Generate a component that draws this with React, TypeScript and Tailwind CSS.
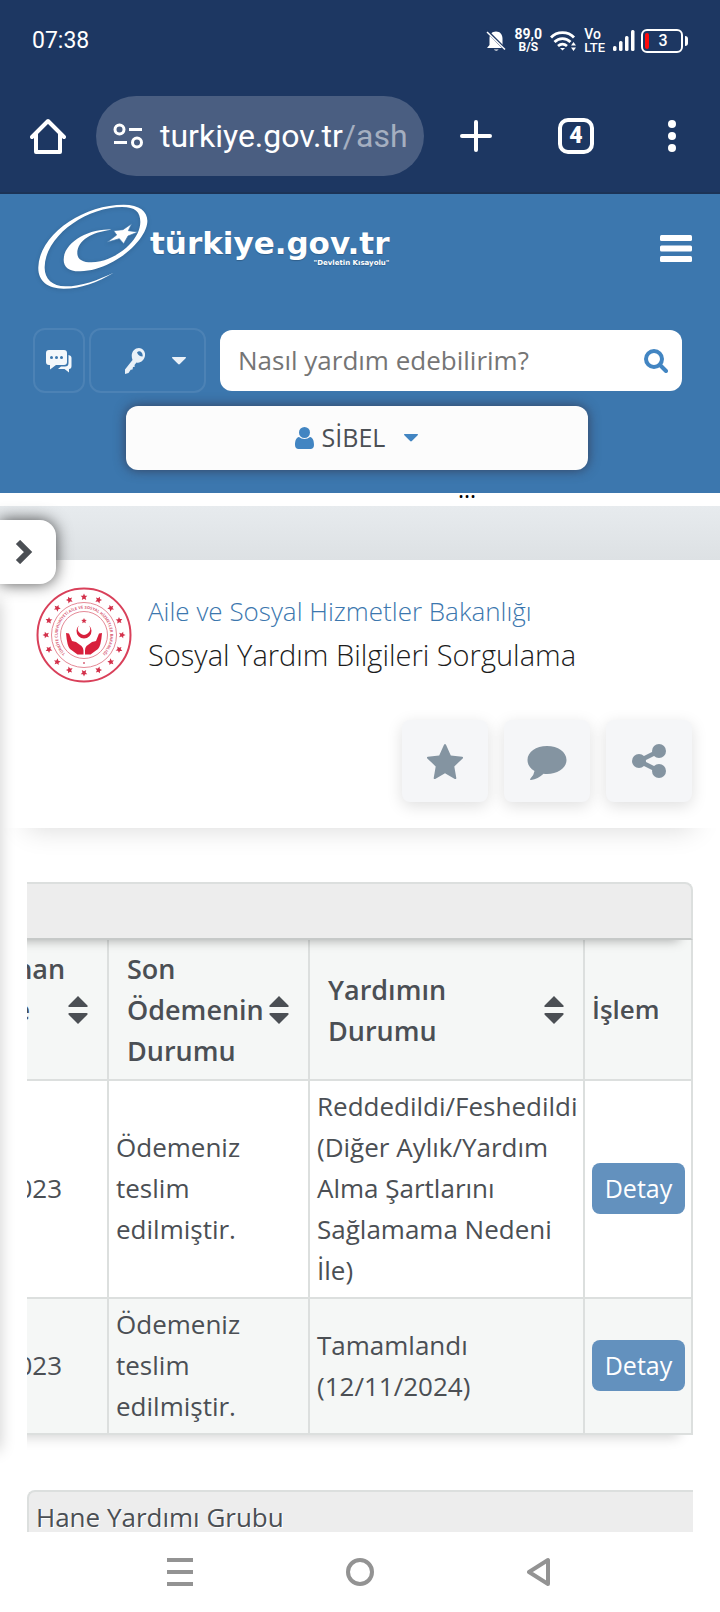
import type { ReactNode } from 'react';

const openSans = "font-['Open_Sans','Noto_Sans',sans-serif]";

const rows = [
  {
    date: '01/01/2023',
    payment: 'Ödemeniz\nteslim\nedilmiştir.',
    status:
      'Reddedildi/Feshedildi\n(Diğer Aylık/Yardım\nAlma Şartlarını\nSağlamama Nedeni\nİle)',
  },
  {
    date: '01/01/2023',
    payment: 'Ödemeniz\nteslim\nedilmiştir.',
    status: 'Tamamlandı\n(12/11/2024)',
  },
];

function StatusBar() {
  return (
    <div className="flex h-[82px] items-center justify-between px-8">
      <span className="text-[23px]">07:38</span>
      <div className="flex items-center">
        <svg className="h-6 w-5" viewBox="0 0 20 24" fill="none">
          <path
            d="M10 2.500c-4 0-6.500 2.800-6.500 7v6.500L1 19h18l-2.500-3V9.500c0-4.200-2.500-7-6.500-7z"
            fill="white"
          />
          <path d="M8 20.500h4.500c-.5 1.500-4 1.500-4.500 0z" fill="white" />
          <path d="M0 1l20 20" stroke="#1d3762" strokeWidth="3" />
          <path d="M1 3l18 17.500" stroke="white" strokeWidth="1.500" />
        </svg>
        <div className="ml-2 flex w-7 flex-col items-center font-bold">
          <span className="text-[14px] leading-[13px]">89,0</span>
          <span className="text-[12px] leading-[13px]">B/S</span>
        </div>
        <svg className="ml-2 h-6 w-[26px]" viewBox="0 0 26 24" fill="none" stroke="white">
          <path d="M1 8.500c6-6.500 17-6.500 23 0" strokeWidth="2.800" />
          <path d="M4.500 13c4.500-4.500 11.500-4.500 16 0" strokeWidth="2.800" />
          <path d="M8 17c3-2.500 6-2.500 9 0" strokeWidth="2.800" />
          <path d="M10 19h5l-2.500 2.500z" fill="white" stroke="none" />
          <path d="M23.500 13l2.500 3.500h-5zM23.500 22l2.500-3.500h-5z" fill="white" stroke="none" />
        </svg>
        <div className="ml-2 flex flex-col font-medium">
          <span className="text-[14px] leading-[13px]">Vo</span>
          <span className="text-[13px] leading-[13px]">LTE</span>
        </div>
        <svg className="ml-2 h-6 w-[22px]" viewBox="0 0 22 24" fill="white">
          <rect x="0" y="17" width="3.500" height="5" rx="1.500" />
          <rect x="6" y="12" width="3.500" height="10" rx="1.500" />
          <rect x="12" y="7" width="3.500" height="15" rx="1.500" />
          <rect x="18" y="1" width="3.500" height="21" rx="1.500" />
        </svg>
        <div className="ml-1.5 flex items-center">
          <div className="flex h-6 w-[42px] items-center rounded-md border-2 border-white pl-0.5">
            <span className="h-4 w-1 rounded-sm bg-[#ff0a0a]" />
            <span className="flex-1 pr-1 text-center text-[16px] leading-4 font-medium">3</span>
          </div>
          <span className="ml-0.5 h-2.5 w-[3px] rounded-r bg-white" />
        </div>
      </div>
    </div>
  );
}

function BrowserBar() {
  return (
    <div className="flex items-center border-b-2 border-[#1c3356] pt-3.5 pr-9 pb-4 pl-[30px]">
      <button type="button" aria-label="Ana sayfa">
        <svg className="size-9" viewBox="0 0 36 36" fill="none" stroke="white" strokeWidth="4">
          <path d="M2 19L18 3l16 16" strokeLinejoin="round" strokeLinecap="round" />
          <path d="M6 16v18h24V16" strokeLinejoin="round" />
        </svg>
      </button>
      <button
        type="button"
        className="ml-[30px] flex h-20 min-w-0 flex-1 items-center rounded-full bg-[#4a5e81] pl-4"
      >
        <svg className="size-8 shrink-0" viewBox="0 0 32 32" fill="none" stroke="white" strokeWidth="3">
          <circle cx="7.500" cy="9.500" r="4.500" />
          <path d="M17 9.500h13M2 22.500h13" />
          <circle cx="25" cy="22.500" r="4.500" />
        </svg>
        <span className="ml-4 text-[32px]">
          turkiye.gov.tr<span className="text-[#a5afc0]">/ash</span>
        </span>
      </button>
      <button type="button" aria-label="Yeni sekme" className="ml-9">
        <svg className="size-8" viewBox="0 0 32 32" stroke="white" strokeWidth="4" strokeLinecap="round">
          <path d="M16 2v28M2 16h28" />
        </svg>
      </button>
      <button
        type="button"
        aria-label="Sekmeler"
        className="ml-[66px] flex size-9 items-center justify-center rounded-[10px] border-4 border-white text-[23px] font-black"
      >
        4
      </button>
      <button type="button" aria-label="Menü" className="ml-[66px]">
        <svg className="h-8 w-6" viewBox="0 0 24 32" fill="white">
          <circle cx="12" cy="4" r="4" />
          <circle cx="12" cy="16" r="4" />
          <circle cx="12" cy="28" r="4" />
        </svg>
      </button>
    </div>
  );
}

function Logo() {
  return (
    <a href="#" aria-label="türkiye.gov.tr" className="flex text-white">
      <svg className="h-[87px] w-[113px] drop-shadow-sm" viewBox="110 38 339 261" fill="white">
        <path d="M340 247C290 277 240 295 190 295C140 295 112 270 114 230C118 130 250 43 370 43C420 43 443 65 441 95C438 150 340 240 240 243C205 244 190 230 190 208C190 160 260 114 333 118C275 125 230 150 231 190C232 215 265 220 300 213C370 195 420 140 420 95C420 65 405 50 365 50C260 50 135 135 133 230C132 265 155 287 195 288C245 288 290 270 340 247Z" />
        <path
          d="M394 100L384 121L413 125L383 137L370 160L357 145L320 156L349 134L340 121L368 118Z"
          stroke="#3c77ae"
          strokeWidth="2"
        />
      </svg>
      <span className="flex flex-col items-end pt-[23px] font-['DejaVu_Sans',sans-serif] font-bold text-shadow-xs">
        <span className="text-[31px] leading-[34px]">türkiye.gov.tr</span>
        <span className="text-[7px] leading-[7px]">&quot;Devletin Kısayolu&quot;</span>
      </span>
    </a>
  );
}

function Caret({ className }: { className: string }) {
  return (
    <svg className={className} viewBox="0 0 16 9" fill="currentColor">
      <path d="M1 0h14c1 0 1 .8.5 1.300L9 8c-.6.600-1.400.600-2 0L.5 1.300C0 .8 0 0 1 0z" />
    </svg>
  );
}

function SiteHeader() {
  return (
    <header className="bg-[#3c77ae] pt-[9px] pb-[23px]">
      <div className="flex h-[86px] items-start justify-between pr-7 pl-[37px]">
        <Logo />
        <button type="button" aria-label="Menü" className="mt-8 text-white">
          <svg className="h-[27px] w-8" viewBox="0 0 32 27" fill="currentColor">
            <rect width="32" height="6" rx="1.500" />
            <rect y="10.500" width="32" height="6" rx="1.500" />
            <rect y="21" width="32" height="6" rx="1.500" />
          </svg>
        </button>
      </div>
      <div className="mt-[39px] flex items-center pr-[38px] pl-[33px]">
        <button
          type="button"
          aria-label="Mesajlar"
          className="flex h-[65px] w-[52px] items-center justify-center rounded-xl border-2 border-[#4c82b5] text-[#f4f8fb]"
        >
          <svg className="h-6 w-[26px]" viewBox="0 0 26 24" fill="currentColor">
            <path d="M3 1h15q3 0 3 3v9q0 3-3 3h-8l-6 4.500V16H3q-3 0-3-3V4q0-3 3-3z" />
            <path d="M22.500 6q3 .5 3 3v8q0 3-2.500 3v3.500L18.500 20H12l3-2.500h4q3.500 0 3.500-3.500z" />
            <g fill="#3c77ae">
              <circle cx="5.500" cy="8.500" r="1.500" />
              <circle cx="10.500" cy="8.500" r="1.500" />
              <circle cx="15.500" cy="8.500" r="1.500" />
            </g>
          </svg>
        </button>
        <button
          type="button"
          aria-label="Giriş seçenekleri"
          className="ml-1 flex h-[65px] w-[117px] items-center justify-end rounded-xl border-2 border-[#4c82b5] pr-[17px] text-[#eaf1f8]"
        >
          <svg className="h-[26px] w-5" viewBox="0 0 20 26" fill="currentColor">
            <path
              fillRule="evenodd"
              d="M14 0c4 .3 6.500 3.500 6 7.500-.5 4.500-4.500 8-8.500 7L9.500 17l.3 1.700-1.800.3-.5 2.500-1.800.3L3.500 25 0 26v-4.500L7.500 12C5 5 9 0 14 0zM12 4.500c1 2.500 3 4 5.500 4C18.500 5 14.500 1.500 12 4.500z"
            />
          </svg>
          <Caret className="ml-[26px] h-2 w-4" />
        </button>
        <form className="ml-3.5 flex h-[61px] min-w-0 flex-1 items-center rounded-xl bg-white pr-3.5 pl-[18px]">
          <input
            type="search"
            aria-label="Nasıl yardım edebilirim?"
            placeholder="Nasıl yardım edebilirim?"
            className="min-w-0 flex-1 text-[26px] text-[#444] outline-none placeholder:text-[#757575]"
          />
          <button type="button" aria-label="Ara">
            <svg className="size-6" viewBox="0 0 24 24" fill="none" stroke="#4285c2" strokeWidth="4">
              <circle cx="10" cy="10" r="8" />
              <path d="M16 16l6 6" strokeLinecap="round" />
            </svg>
          </button>
        </form>
      </div>
      <div className="mt-[13px] flex pr-[132px] pl-[126px]">
        <button
          type="button"
          className="flex h-16 flex-1 items-center justify-center rounded-xl bg-[#fcfcfc] text-[25px] text-[#4b4f54] shadow-[0_0_12px_rgba(50,50,70,0.8)]"
        >
          <svg className="h-[22px] w-[19px]" viewBox="0 0 19 22" fill="#4285c2">
            <circle cx="9.500" cy="5.500" r="5.500" />
            <path d="M4 10c3 2.500 8 2.500 11 0 3 .5 4 4 4 8 0 2.500-1.500 4-3.500 4h-12C1.500 22 0 20.500 0 18c0-4 1-7.500 4-8z" />
          </svg>
          <span className="ml-2">SİBEL</span>
          <Caret className="ml-[18px] h-2 w-4 text-[#4285c2]" />
        </button>
      </div>
    </header>
  );
}

function Seal() {
  const angles = Array.from({ length: 16 }, (_, i) => i * 22.5);

  return (
    <svg className="size-24 shrink-0" viewBox="-48 -48 96 96" fill="none">
      <circle r="46.500" stroke="#d9405a" strokeWidth="2" />
      <circle r="32.500" stroke="#e58a97" strokeWidth="1" />
      <circle r="23.500" stroke="#e58a97" strokeWidth="1" />
      {angles.map((angle) => (
        <path
          key={angle}
          transform={`rotate(${angle})`}
          d="M0-41.500l1 2.200 2.300.1-1.700 1.700.6 2.400L0-36.300l-2.200 1.200.6-2.400-1.700-1.700 2.300-.1z"
          fill="#d3304a"
        />
      ))}
      <path id="seal-ring" d="M-9.500 24.500A26.300 26.300 0 1 1 9.500 24.500" />
      <text fill="#d9647a" className="text-[4px] font-bold">
        <textPath href="#seal-ring" startOffset="50%" textAnchor="middle">
          TÜRKİYE CUMHURİYETİ AİLE VE SOSYAL HİZMETLER BAKANLIĞI
        </textPath>
      </text>
      <circle cy="28" r="1" fill="#d9647a" />
      <path d="M0-17l.8 1.800 2 .2-1.500 1.300.5 2L0-12.800l-1.800 1.100.5-2-1.500-1.300 2-.2z" fill="#d3304a" />
      <path d="M-5-9.500a7.500 7.500 0 1 0 10 0a6 6 0 1 1-10 0z" fill="#d8203c" />
      <path
        d="M-18-2l3 .5 3 7.500 4 1 5.500 4q2 2 2 4.500v4h-6L-14 14q-3-3-4-16zM18-2l-3 .5-3 7.500-4 1-5.500 4Q.8 13 1 15.500v4h5.500L14 14q3-3 4-16z"
        fill="#d8203c"
      />
    </svg>
  );
}

function ActionButton({ label, children }: { label: string; children: ReactNode }) {
  return (
    <button
      type="button"
      aria-label={label}
      className="flex h-[82px] w-[86px] items-center justify-center rounded-lg bg-[#f5f6f8] text-[#8494a1] shadow-[0_4px_16px_rgba(0,0,0,0.13)]"
    >
      {children}
    </button>
  );
}

function ServiceCard() {
  return (
    <section className="bg-white pt-[27px] pb-[26px] shadow-[0_27px_27px_-27px_rgba(0,0,0,0.16)]">
      <div className="flex items-center pr-7 pl-9">
        <Seal />
        <div className="ml-4 pb-1 font-light">
          <a href="#" className="block text-[26px] leading-[43px] text-[#3c77ae]">
            Aile ve Sosyal Hizmetler Bakanlığı
          </a>
          <h1 className="text-[29px] leading-[43px] text-[#1c1c1c]">
            Sosyal Yardım Bilgileri Sorgulama
          </h1>
        </div>
      </div>
      <div className="mt-[37px] flex justify-end gap-4 pr-7">
        <ActionButton label="Favorilere ekle">
          <svg className="h-[35px] w-9" viewBox="0 0 36 35" fill="currentColor">
            <path d="M17 .8q1-1.500 2 0l4.800 10.700 11.400 1.200q1.500.5.500 1.700l-8.400 8 2 11.600q0 1.500-1.500.9L18 29.200 8.200 34.900q-1.500.6-1.500-.9l2-11.600-8.400-8q-1-1.200.5-1.700l11.400-1.200z" />
          </svg>
        </ActionButton>
        <ActionButton label="Yorum yap">
          <svg className="mt-1 h-[34px] w-10" viewBox="0 0 40 34" fill="currentColor">
            <path d="M20 0c11 0 19.500 6 19.500 14S31 28 20 28q-2 0-3.500-.3Q11 33 4 34q-1.500 0-.5-1.500 3.500-3.500 4-7.500C3 22.500.5 18.500.5 14 .5 6 9 0 20 0z" />
          </svg>
        </ActionButton>
        <ActionButton label="Paylaş">
          <svg className="h-[34px] w-[34px]" viewBox="0 0 34 34" fill="currentColor">
            <circle cx="7" cy="17" r="7" />
            <circle cx="27" cy="7" r="7" />
            <circle cx="27" cy="27" r="7" />
            <path d="M27 7L7 17l20 10" fill="none" stroke="currentColor" strokeWidth="4.500" />
          </svg>
        </ActionButton>
      </div>
    </section>
  );
}

function SortHeader({ title }: { title: string }) {
  return (
    <th className="border-b-2 border-l-2 border-[#dcdfde] pr-[19px] pl-[18px]">
      <button
        type="button"
        className="flex w-full items-center justify-between text-left text-[27px] font-semibold whitespace-pre"
      >
        {title}
        <svg className="-ml-2 h-7 w-5 shrink-0" viewBox="0 0 20 28" fill="#4b4f54">
          <path d="M10 0l9.500 9.500q.5 1.500-1 1.500h-17q-1.500 0-1-1.500zM10 28l9.500-9.500q.5-1.500-1-1.500h-17q-1.500 0-1 1.500z" />
        </svg>
      </button>
    </th>
  );
}

function Cell({ children }: { children: ReactNode }) {
  return (
    <td className="border-b-2 border-l-2 border-[#dcdfde] pt-[5px] pr-1.5 pb-1.5 pl-[7px] whitespace-pre">
      {children}
    </td>
  );
}

function AidTable() {
  return (
    <div className="flex justify-end overflow-hidden pb-[27px]">
      <div className="w-[778px] shrink-0 shadow-[0_16px_12px_-14px_rgba(0,0,0,0.18)]">
        <div className="relative h-[58px] rounded-t-lg border-2 border-b-[#c6c9c8] border-[#dcdfde] bg-[#ededed] shadow-[0_14px_12px_-14px_rgba(0,0,0,0.35)]" />
        <table className="w-full table-fixed border-separate border-spacing-0 border-r-2 border-[#dcdfde] text-[26px] leading-[41px] text-[#4b4f54]">
          <colgroup>
            <col className="w-[192px]" />
            <col className="w-[201px]" />
            <col className="w-[275px]" />
            <col />
          </colgroup>
          <thead className="bg-[#f5f7f6]">
            <tr className="h-[141px]">
              <SortHeader title={'Planlanan\nÖdeme\n '} />
              <SortHeader title={'Son\nÖdemenin\nDurumu'} />
              <SortHeader title={'Yardımın\nDurumu'} />
              <th className="border-b-2 border-l-2 border-[#dcdfde] px-[7px] text-left font-semibold text-shadow-[1px_1px_0_white]">
                İşlem
              </th>
            </tr>
          </thead>
          <tbody>
            {rows.map((row) => (
              <tr key={row.status} className="even:bg-[#f5f7f6]">
                <Cell>{row.date}</Cell>
                <Cell>{row.payment}</Cell>
                <Cell>{row.status}</Cell>
                <Cell>
                  <button
                    type="button"
                    className="block h-[51px] w-full rounded-lg bg-[#6391be] text-[25px] text-white"
                  >
                    Detay
                  </button>
                </Cell>
              </tr>
            ))}
          </tbody>
        </table>
      </div>
    </div>
  );
}

function SidePanel() {
  return (
    <aside className="absolute top-3.5 left-0">
      <div className="absolute top-20 right-full h-[850px] w-4 shadow-[0_0_16px_rgba(0,0,0,0.2)]" />
      <button
        type="button"
        aria-label="Menüyü aç"
        className="relative flex h-16 w-14 items-center rounded-r-2xl bg-white pl-[15px] shadow-[0_0_16px_rgba(0,0,0,0.7)]"
      >
        <svg className="h-6 w-[18px]" viewBox="0 0 18 24" fill="none" stroke="#4b4f54" strokeWidth="6">
          <path d="M3 2l10 10L3 22" />
        </svg>
      </button>
    </aside>
  );
}

function SystemNav() {
  return (
    <nav className="flex h-20 shrink-0 items-center justify-around bg-white px-[90px]">
      <button type="button" aria-label="Son uygulamalar">
        <svg className="h-7 w-[26px]" viewBox="0 0 26 28" fill="#939393">
          <path d="M0 0h26v4H0zM0 12h26v4H0zM0 24h26v4H0z" />
        </svg>
      </button>
      <button type="button" aria-label="Ana ekran">
        <svg className="size-7" viewBox="0 0 28 28" fill="none" stroke="#939393" strokeWidth="4">
          <circle cx="14" cy="14" r="12" />
        </svg>
      </button>
      <button type="button" aria-label="Geri">
        <svg className="h-[30px] w-[26px]" viewBox="0 0 26 30" fill="none" stroke="#939393" strokeWidth="4">
          <path d="M21 3v24L2 15z" strokeLinejoin="round" />
        </svg>
      </button>
    </nav>
  );
}

export default function App() {
  return (
    <div className={`flex h-screen flex-col overflow-hidden bg-white ${openSans}`}>
      <div className="bg-[#1d3762] font-['Roboto',sans-serif] text-white">
        <StatusBar />
        <BrowserBar />
      </div>

      <div className="min-h-0 flex-1 overflow-hidden">
        <SiteHeader />
        <div className="flex h-[13px] items-end justify-center overflow-hidden pl-[214px]">
          <span className="text-[23px] leading-[34px] text-black">...</span>
        </div>
        <div className="relative">
          <div className="h-[54px] bg-linear-to-b from-[#e7ebee] to-[#dde1e4]" />
          <ServiceCard />
          <main className="px-[27px] pt-[54px]">
            <AidTable />
            <section className="mt-7 h-20 rounded-tl-lg border-t-2 border-l-2 border-[#dcdfde] bg-[#ededed] pt-[5px] pl-[7px]">
              <h2 className="text-[26px] leading-[41px] text-[#4b4f54] text-shadow-[1px_1px_0_white]">
                Hane Yardımı Grubu
              </h2>
            </section>
          </main>
          <SidePanel />
        </div>
      </div>

      <SystemNav />
    </div>
  );
}
